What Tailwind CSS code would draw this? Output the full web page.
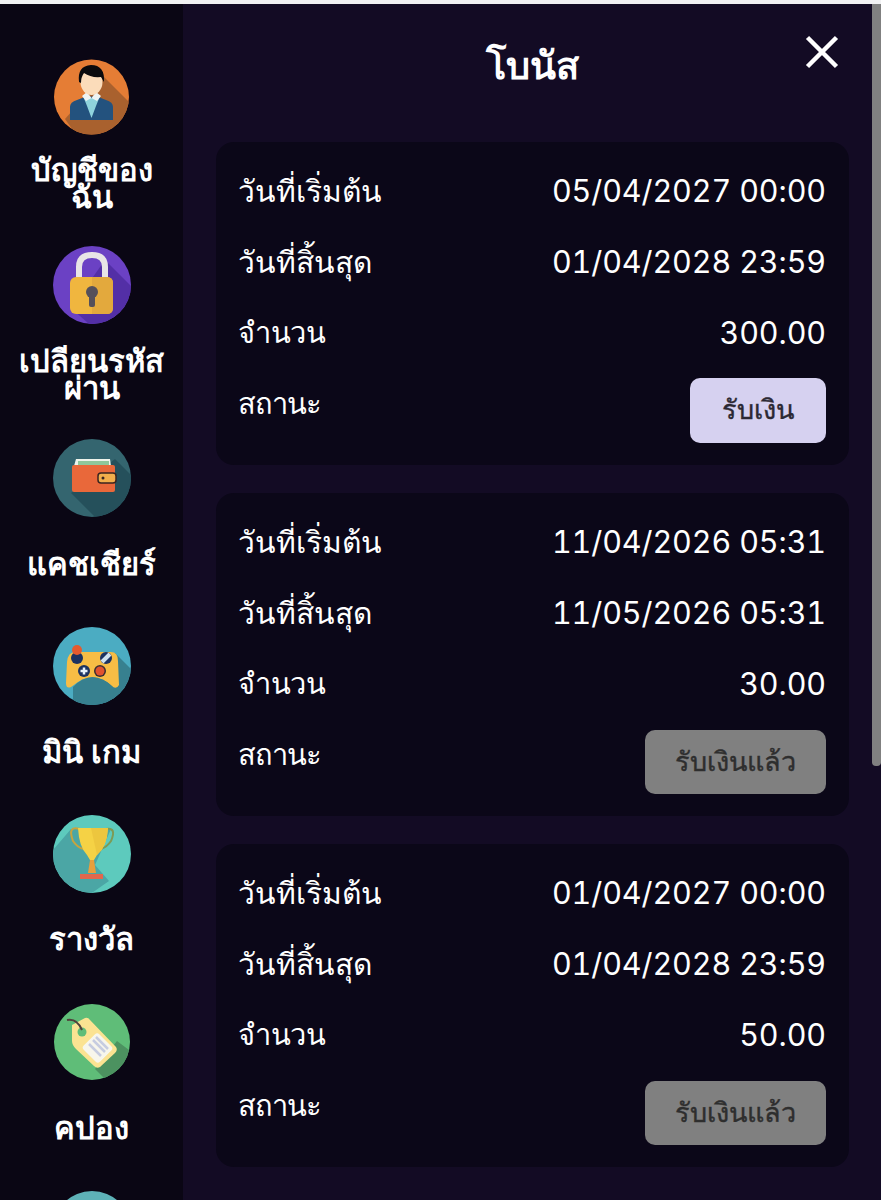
<!DOCTYPE html>
<html lang="th">
<head>
<meta charset="utf-8">
<script src="https://cdn.jsdelivr.net/npm/@tailwindcss/browser@4"></script>
<title>โบนัส</title>
</head>
<body class="m-0 bg-[#f1f1f3]">
<div class="w-[881px] h-[1200px] overflow-hidden pt-[4px] flex font-['Inter','Noto_Sans','Noto_Sans_CJK_SC',sans-serif] text-white">
  <aside class="w-[183px] shrink-0 h-[1196px] overflow-hidden bg-[#0a0614] pt-[54px] flex flex-col items-center">
    <div class="w-full h-[188px] shrink-0 flex flex-col items-center">
      <svg class="w-[78px] h-[78px]" viewBox="0 0 78 78"><defs><clipPath id="c1"><circle cx="38.500" cy="39" r="37.500"/></clipPath></defs><g clip-path="url(#c1)"><rect width="78" height="78" fill="#e57d35"/><path d="M50 18 L78 46 V78 H24 L12 61 Z" fill="#a9612e"/><path d="M17 62 V49 Q17 44 24 42 L33 38.500 H44 L53 42 Q60 44 60 49 V62 Z" fill="#23527e"/><path d="M30 38 L38.500 40 L47 38 L43 48 L38.500 60 L34 48 Z" fill="#8fd3dc"/><path d="M29 38 L34 34 L38.500 40 L43 34 L48 38 L44 43 L38.500 40 L33 43 Z" fill="#eef3f3"/><ellipse cx="38.500" cy="24" rx="11" ry="13" fill="#fbdcba"/><path d="M26 24 Q24 8 38 7 Q52 7 51 24 L48 19 Q38 20 31 15 Q28 19 28 25 Z" fill="#0a0a0d"/></g></svg>
      <div class="h-[94px] flex items-center text-center font-bold text-[31px] leading-[27px]"><span>บัญชีของ<br>ฉัน</span></div>
    </div>
    <div class="w-full h-[193px] shrink-0 flex flex-col items-center">
      <svg class="w-[78px] h-[78px]" viewBox="0 0 78 78"><defs><clipPath id="c2"><circle cx="39" cy="39" r="39"/></clipPath></defs><g clip-path="url(#c2)"><rect width="78" height="78" fill="#6b41c4"/><path d="M52 14 L78 40 V78 H36 L18 62 Z" fill="#532fa6"/><path d="M26 36 V21 Q26 9 39 9 Q52 9 52 21 V36" fill="none" stroke="#e8e4e6" stroke-width="6"/><rect x="17" y="31" width="43" height="37" rx="6" fill="#f0b63f"/><path d="M39 31 H54 Q60 31 60 37 V62 Q60 68 54 68 H39 Z" fill="#e3a93d"/><circle cx="39" cy="46" r="6" fill="#55505a"/><rect x="36" y="47" width="6" height="14" rx="2" fill="#55505a"/></g></svg>
      <div class="h-[99px] flex items-center justify-center text-center font-bold text-[31px] leading-[27px] whitespace-nowrap"><span>เปลียนรหัส<br>ผ่าน</span></div>
    </div>
    <div class="w-full h-[188px] shrink-0 flex flex-col items-center">
      <svg class="w-[78px] h-[78px]" viewBox="0 0 78 78"><defs><clipPath id="c3"><circle cx="39" cy="39" r="39"/></clipPath></defs><g clip-path="url(#c3)"><rect width="78" height="78" fill="#34656f"/><path d="M18 54 L62 20 L80 38 V80 H44 Z" fill="#25505b"/><path d="M21 27 L23 20 H57 L58 27 Z" fill="#eef3ea"/><rect x="25" y="22" width="31" height="7" fill="#8fc79b"/><rect x="19" y="26" width="43" height="27" rx="2" fill="#e9683a"/><rect x="45" y="34" width="18" height="10" rx="3" fill="#f2ae4b" stroke="#3a2520" stroke-width="1.500"/><circle cx="50" cy="39" r="1.500" fill="#3a2520"/></g></svg>
      <div class="h-[92px] flex items-center text-center font-bold text-[31px] leading-[27px]">แคชเชียร์</div>
    </div>
    <div class="w-full h-[188px] shrink-0 flex flex-col items-center">
      <svg class="w-[78px] h-[78px]" viewBox="0 0 78 78"><defs><clipPath id="c4"><circle cx="39" cy="39" r="39"/></clipPath></defs><g clip-path="url(#c4)"><rect width="78" height="78" fill="#4bacc2"/><path d="M22 68 L62 26 L80 44 V80 H34 Z" fill="#37808f"/><path d="M22 25 H58 Q65 25 65 34 L66 58 Q64 62 60 60 L54 55 Q39 46 25 55 L18 60 Q13 62 13 56 L14 35 Q15 25 22 25 Z" fill="#f7bd45"/><path d="M20 60 Q39 40 60 60 L62 78 H20 Z" fill="#37808f"/><circle cx="24" cy="31" r="6" fill="#1c3261"/><circle cx="24" cy="23" r="5" fill="#e55a2e"/><circle cx="53" cy="31" r="6" fill="#1c3261"/><path d="M49 35 L57 27" stroke="#cfe1ef" stroke-width="4"/><circle cx="31" cy="44" r="6" fill="#1c3261"/><path d="M27.500 44 H34.500 M31 40.500 V47.500" stroke="#e6f2fb" stroke-width="2.500"/><circle cx="47" cy="44" r="6" fill="#3a2d33"/><circle cx="47" cy="44" r="4.500" fill="#e1522f"/></g></svg>
      <div class="h-[92px] flex items-center text-center font-bold text-[31px] leading-[27px]">มินิ เกม</div>
    </div>
    <div class="w-full h-[188px] shrink-0 flex flex-col items-center">
      <svg class="w-[78px] h-[78px]" viewBox="0 0 78 78"><defs><clipPath id="c5"><circle cx="39" cy="39" r="39"/></clipPath></defs><g clip-path="url(#c5)"><rect width="78" height="78" fill="#5dcabd"/><path d="M0 35 L18 14 L58 14 L42 50 L56 66 L36 80 H20 L0 50 Z" fill="#4ba6a5"/><path d="M27 14 Q14 10 20 26 Q24 32 30 34" fill="none" stroke="#c7a43e" stroke-width="2"/><path d="M53 14 Q64 12 58 26 Q54 32 48 34" fill="none" stroke="#7d9b55" stroke-width="2"/><path d="M25 13 H55 Q54 32 44 40 L41 45 H37 L34 40 Q26 32 25 13 Z" fill="#f5d245"/><path d="M38 13 H55 Q54 32 44 40 Z" fill="#edc63e"/><path d="M37 45 H41 L43 58 H35 Z" fill="#e89f3d"/><rect x="27" y="59" width="23" height="5" fill="#e2674d"/></g></svg>
      <div class="h-[91px] flex items-center text-center font-bold text-[31px] leading-[27px]">รางวัล</div>
    </div>
    <div class="w-full h-[188px] shrink-0 flex flex-col items-center">
      <svg class="w-[78px] h-[78px]" viewBox="0 0 78 78"><defs><clipPath id="c6"><circle cx="39" cy="39" r="38"/></clipPath></defs><g clip-path="url(#c6)"><rect width="78" height="78" fill="#5fbd78"/><path d="M42 66 L64 38 L80 50 V80 H56 Z" fill="#4c9260"/><path d="M19 22 L32 15 Q35 14 37 17 L63 44 Q65 47 62 50 L47 64 Q44 66 41 63 L23 46 Q19 42 19 38 Z" fill="#fbe392"/><circle cx="29" cy="29" r="4.500" fill="#5fbd78"/><path d="M29 27 Q24 15 14 17" fill="none" stroke="#52423c" stroke-width="2"/><rect x="33" y="34" width="23" height="22" rx="3" transform="rotate(45 44.500 45)" fill="#f7f6ec"/><path d="M37 41 L49 53 M41 37 L53 49 M44 34 L56 46" stroke="#c6cce0" stroke-width="2.500" transform="translate(-1 0)"/></g></svg>
      <div class="h-[92px] flex items-center text-center font-bold text-[31px] leading-[27px]">คปอง</div>
    </div>
    <svg class="w-[78px] h-[78px] shrink-0" viewBox="0 0 78 78"><circle cx="39" cy="39" r="39" fill="#5eb2b8"/></svg>
  </aside>
  <main class="relative flex-1 min-w-0 h-[1196px] overflow-hidden bg-[#130b24] flex">
    <div class="w-[689px] shrink-0 pl-[33px] pr-[23px]">
      <h1 class="h-[138px] pt-[38px] text-center font-bold text-[38px] leading-[46px] pr-[1px]">โบนัส</h1>
      <button class="absolute left-[622px] top-[31px] w-[34px] h-[34px]" aria-label="close"><svg viewBox="0 0 34 34" class="w-full h-full"><path d="M2.500 2.500 L31.500 31.500 M31.500 2.500 L2.500 31.500" stroke="#fff" stroke-width="4.500" fill="none"/></svg></button>
      <div class="flex flex-col gap-[28px]">
        <section class="h-[323px] rounded-[18px] bg-[#0b0718] pl-[22px] pr-[23px] pt-[14px]">
          <div class="h-[71px] flex justify-between items-start leading-[70px]"><span class="text-[30px]">วันที่เริ่มต้น</span><span class="text-[30.5px] tracking-[-0.1px] tabular-nums">05/04/2027 00:00</span></div>
          <div class="h-[71px] flex justify-between items-start leading-[70px]"><span class="text-[30px]">วันที่สิ้นสุด</span><span class="text-[30.5px] tracking-[-0.1px] tabular-nums">01/04/2028 23:59</span></div>
          <div class="h-[71px] flex justify-between items-start leading-[70px]"><span class="text-[29px] tracking-[-0.4px]">จำนวน</span><span class="text-[30.5px] tracking-[-0.1px] tabular-nums">300.00</span></div>
          <div class="flex justify-between items-start"><span class="leading-[70px] text-[29px] tracking-[-1px]">สถานะ</span><button class="mt-[9px] h-[65px] w-[136px] rounded-[10px] bg-[#d6d1f0] text-[#2b2833] text-[27px] font-medium [-webkit-text-stroke:0.4px_#2b2833]">รับเงิน</button></div>
        </section>
        <section class="h-[323px] rounded-[18px] bg-[#0b0718] pl-[22px] pr-[23px] pt-[14px]">
          <div class="h-[71px] flex justify-between items-start leading-[70px]"><span class="text-[30px]">วันที่เริ่มต้น</span><span class="text-[30.5px] tracking-[-0.1px] tabular-nums">11/04/2026 05:31</span></div>
          <div class="h-[71px] flex justify-between items-start leading-[70px]"><span class="text-[30px]">วันที่สิ้นสุด</span><span class="text-[30.5px] tracking-[-0.1px] tabular-nums">11/05/2026 05:31</span></div>
          <div class="h-[71px] flex justify-between items-start leading-[70px]"><span class="text-[29px] tracking-[-0.4px]">จำนวน</span><span class="text-[30.5px] tracking-[-0.1px] tabular-nums">30.00</span></div>
          <div class="flex justify-between items-start"><span class="leading-[70px] text-[29px] tracking-[-1px]">สถานะ</span><button class="mt-[10px] h-[64px] w-[181px] rounded-[10px] bg-[#808080] text-[#2e2e2e] text-[27px] font-medium [-webkit-text-stroke:0.4px_#2e2e2e]">รับเงินแล้ว</button></div>
        </section>
        <section class="h-[323px] rounded-[18px] bg-[#0b0718] pl-[22px] pr-[23px] pt-[14px]">
          <div class="h-[71px] flex justify-between items-start leading-[70px]"><span class="text-[30px]">วันที่เริ่มต้น</span><span class="text-[30.5px] tracking-[-0.1px] tabular-nums">01/04/2027 00:00</span></div>
          <div class="h-[71px] flex justify-between items-start leading-[70px]"><span class="text-[30px]">วันที่สิ้นสุด</span><span class="text-[30.5px] tracking-[-0.1px] tabular-nums">01/04/2028 23:59</span></div>
          <div class="h-[71px] flex justify-between items-start leading-[70px]"><span class="text-[29px] tracking-[-0.4px]">จำนวน</span><span class="text-[30.5px] tracking-[-0.1px] tabular-nums">50.00</span></div>
          <div class="flex justify-between items-start"><span class="leading-[70px] text-[29px] tracking-[-1px]">สถานะ</span><button class="mt-[10px] h-[64px] w-[181px] rounded-[10px] bg-[#808080] text-[#2e2e2e] text-[27px] font-medium [-webkit-text-stroke:0.4px_#2e2e2e]">รับเงินแล้ว</button></div>
        </section>
      </div>
    </div>
    <div class="w-[9px] h-[762px] bg-[#808080] rounded-b-[4px]"></div>
  </main>
</div>
</body>
</html>
